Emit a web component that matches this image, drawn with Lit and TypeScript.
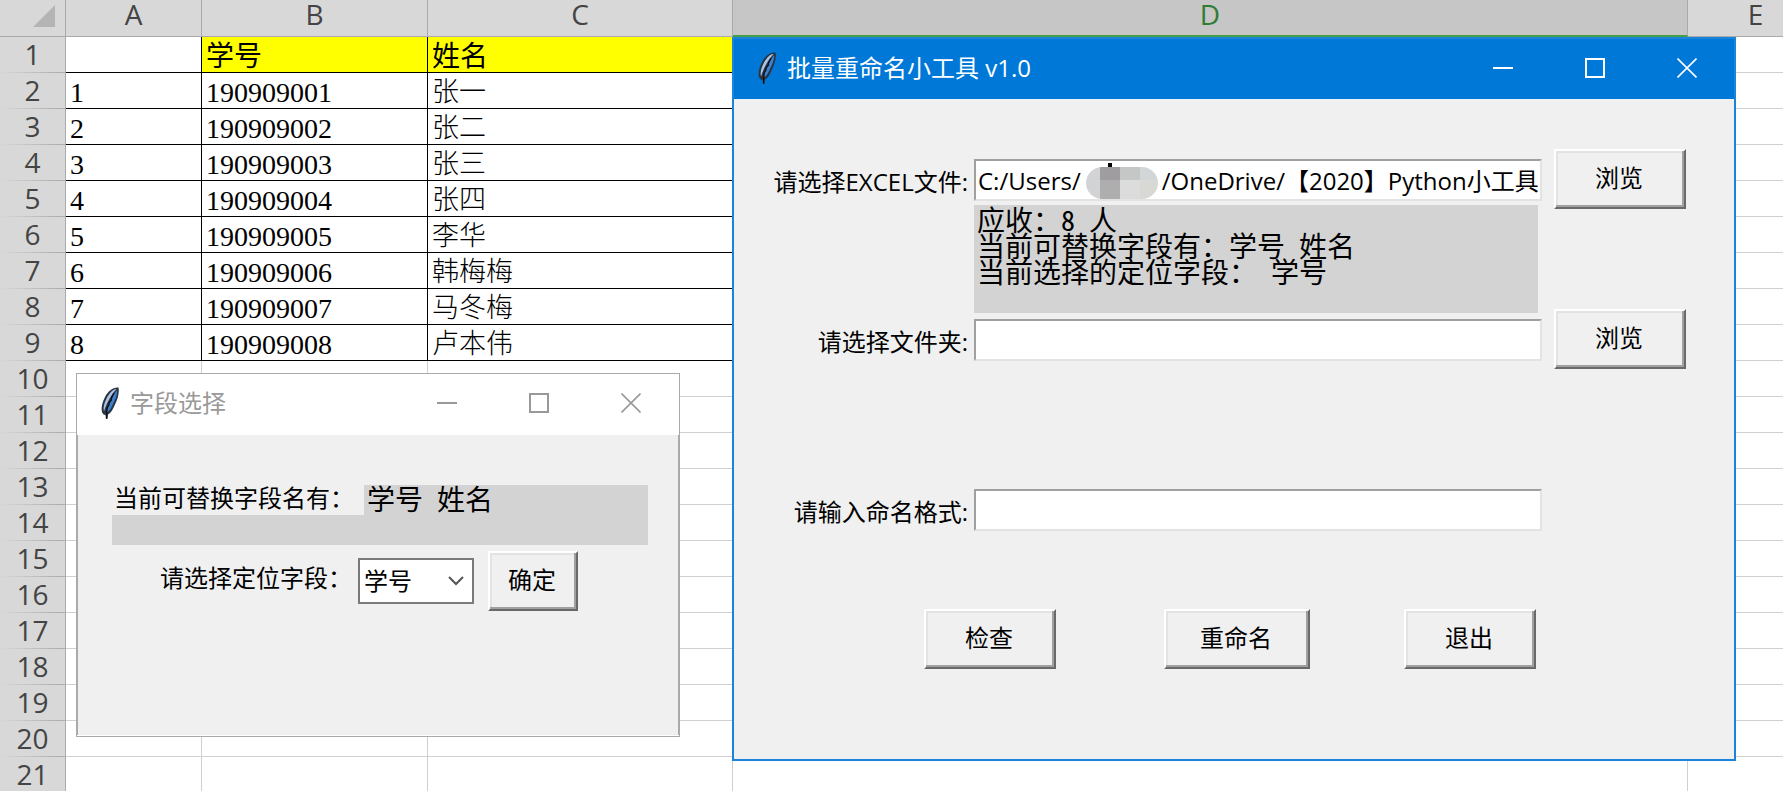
import { LitElement, html, css } from "lit";
import { customElement, property } from "lit/decorators.js";
import { classMap } from "lit/directives/class-map.js";

const COLUMNS = ["A", "B", "C", "D", "E"];
const RECORDS: string[][] = [
  ["", "学号", "姓名"],
  ["1", "190909001", "张一"],
  ["2", "190909002", "张二"],
  ["3", "190909003", "张三"],
  ["4", "190909004", "张四"],
  ["5", "190909005", "李华"],
  ["6", "190909006", "韩梅梅"],
  ["7", "190909007", "马冬梅"],
  ["8", "190909008", "卢本伟"],
];
const ROW_COUNT = 21;
const EXCEL_PATH = "C:/Users/             /OneDrive/【2020】Python小工具";
const LOG = "应收：8 人\n当前可替换字段有：学号 姓名\n当前选择的定位字段： 学号";

/* Spreadsheet behind the windows; its last column runs past the right edge */
@customElement("sheet-grid")
export class SheetGrid extends LitElement {
  static styles = css`
    :host {
      display: block;
    }
    .sheet {
      width: 1824px;
      min-width: 100%;
      border-collapse: separate;
      border-spacing: 0;
      table-layout: fixed;
      background: #fff;
    }
    .c-index { width: 66px; }
    .c-a { width: 136px; }
    .c-b { width: 226px; }
    .c-c { width: 305px; }
    .c-d { width: 955px; }
    th,
    td {
      box-sizing: border-box;
      padding: 0;
      height: 36px;
      white-space: nowrap;
      border-right: 1px solid #d0d0d0;
      border-bottom: 1px solid #d0d0d0;
    }
    th {
      font: 400 28px/28px "Open Sans", "Noto Sans", sans-serif;
      color: #444;
      background: #d8d8d8;
      text-align: center;
    }
    .col {
      height: 37px;
      padding-bottom: 8px;
      border-bottom-color: #aaa;
      border-right-color: #aaa;
    }
    .selected {
      background: #c6c6c6;
      color: #2f7d32;
      border-bottom: 2px solid #43a047;
      padding-bottom: 7px;
    }
    .row {
      padding-bottom: 2px;
      border-right-color: #aaa;
      border-bottom: 0;
      background:
        linear-gradient(to right, #d8d8d8, #aaa) bottom / 100% 1px no-repeat,
        #d8d8d8;
    }
    .corner {
      display: block;
      margin: 4px 0 0 33px;
    }
    td {
      font: 300 27px/31px "Liberation Serif", "Noto Sans CJK SC", serif;
      color: #000;
      text-align: left;
      padding: 4px 0 0 4px;
    }
    .data {
      border-color: #000;
    }
    .number,
    .title {
      font-size: 28px;
    }
    .title {
      background: #ff0;
      font-weight: 400;
    }
  `;

  render() {
    return html`
      <table class="sheet">
        <colgroup>
          <col class="c-index" /><col class="c-a" /><col class="c-b" />
          <col class="c-c" /><col class="c-d" /><col />
        </colgroup>
        <thead>
          <tr>
            <th class="col">
              <svg class="corner" width="22" height="22" viewBox="0 0 22 22" aria-hidden="true">
                <path d="M22 0V22H0Z" fill="#b4b4b4" />
              </svg>
            </th>
            ${COLUMNS.map(
              (c) => html`<th scope="col" class=${classMap({ col: true, selected: c === "D" })}>${c}</th>`
            )}
          </tr>
        </thead>
        <tbody>
          ${Array.from({ length: ROW_COUNT }, (_, r) => html`
            <tr>
              <th scope="row" class="row">${r + 1}</th>
              ${COLUMNS.map((_c, i) => {
                const data = r < RECORDS.length && i < 3;
                const title = data && r === 0 && i > 0;
                return html`<td class=${classMap({ data, title, number: data && !title && i < 2 })}>${
                  data ? RECORDS[r][i] : ""
                }</td>`;
              })}
            </tr>
          `)}
        </tbody>
      </table>
    `;
  }
}

/* Window frame with a feather icon, a caption and the three caption buttons */
@customElement("app-window")
export class AppWindow extends LitElement {
  @property() caption = "";
  @property({ type: Boolean, reflect: true }) active = false;

  static styles = css`
    :host {
      display: flex;
      flex-direction: column;
      box-sizing: border-box;
      border: 1px solid #aaa;
      background: #fff;
      color: #999;
      font-family: "Open Sans", "Noto Sans CJK SC", sans-serif;
    }
    :host([active]) {
      border: 2px solid #1a84da;
      background: #0078d7;
      color: #fff;
    }
    .bar {
      flex: none;
      box-sizing: border-box;
      display: flex;
      align-items: center;
      height: 61px;
      padding: 0 2px 3px 24px;
    }
    :host([active]) .bar {
      height: 60px;
      padding-right: 1px;
    }
    .icon {
      flex: none;
      width: 18px;
      height: 32px;
    }
    .caption {
      flex: 1;
      margin: 0 0 0 11px;
      font-size: 24px;
      font-weight: 400;
      line-height: 32px;
      white-space: nowrap;
    }
    .control {
      display: grid;
      place-items: center;
      width: 92px;
      height: 48px;
      padding: 0;
      border: 0;
      background: none;
      color: inherit;
    }
    .body {
      flex: 1;
      background: #f0f0f0;
      color: #000;
      border: solid #aaa;
      border-width: 0 1px;
      margin-bottom: 1px;
    }
    :host([active]) .body {
      border: 0;
      margin: 0;
    }
  `;

  private glyph(d: string, width: number) {
    return html`<svg width="20" height="20" viewBox="0 0 20 20" aria-hidden="true">
      <path d=${d} fill="none" stroke="currentColor" stroke-width=${width} />
    </svg>`;
  }

  render() {
    return html`
      <header class="bar">
        <svg class="icon" viewBox="0 0 18 32" aria-hidden="true">
          <path d="M17.500 0.500C12 0 7 4 4 10C1 16 0 21 1 25C1.500 27 3 28 4.500 28L5 32H6.500L7 27.500C10 26 12 22 14 17.500C17 12 18.500 5 17.500 0.500Z" fill="#2a3440" />
          <path d="M15.500 2C11 2.500 8 7 5.500 11.500C3 16.500 2 21 3 24.500C5 18 9 9 15.500 2Z" fill="#a9c4e6" />
          <path d="M16 3C16.500 8 14 13 12 17C10 21.500 8.500 24 6 25.500C7 18 11 10 16 3Z" fill="#3d7fd0" />
          <path d="M13 6L10.500 11L10.500 13L8 16L8 18L6 21L5.500 31.500" fill="none" stroke="#0b0f16" stroke-width="1.200" />
        </svg>
        <h2 class="caption">${this.caption}</h2>
        <button class="control" type="button" aria-label="最小化">${this.glyph("M0 10H20", 2)}</button>
        <button class="control" type="button" aria-label="最大化">${this.glyph("M1 1H19V19H1Z", 2)}</button>
        <button class="control" type="button" aria-label="关闭">${this.glyph("M0.500 0.500L19.500 19.500M19.500 0.500L0.500 19.500", 1.6)}</button>
      </header>
      <section class="body"><slot></slot></section>
    `;
  }
}

/* Shared look of the classic form controls */
const controls = css`
  :host {
    display: block;
    font: 400 24px/32px "Open Sans", "Noto Sans CJK SC", sans-serif;
    color: #000;
  }
  button {
    box-sizing: border-box;
    min-width: 90px;
    height: 60px;
    padding: 0 2px 2px 0;
    font: inherit;
    color: inherit;
    background: #f0f0f0;
    border: 2px solid;
    border-color: #fff #696969 #696969 #fff;
    box-shadow: inset -2px -2px #a0a0a0, inset 2px 2px #e3e3e3;
  }
  .wide {
    width: 132px;
  }
  .wider {
    width: 146px;
  }
  .log {
    font: 400 28px/26px "Noto Sans Mono CJK SC", "Noto Sans CJK SC", monospace;
    color: #000;
    background: #d3d3d3;
  }
  label {
    white-space: nowrap;
  }
`;

@customElement("rename-form")
export class RenameForm extends LitElement {
  static styles = [
    controls,
    css`
      .form {
        display: grid;
        grid-template-columns: 234px 1fr 132px;
        column-gap: 6px;
        padding: 60px 48px 0 0;
        align-items: center;
      }
      label {
        grid-column: 1;
        padding-top: 4px;
        text-align: right;
      }
      .field {
        position: relative;
        margin-right: 6px;
      }
      .entry {
        display: block;
        box-sizing: border-box;
        width: 100%;
        height: 42px;
        padding: 0 0 2px 2px;
        font: inherit;
        color: inherit;
        background: #fff;
        border: 2px solid;
        border-color: #a0a0a0 #e3e3e3 #e3e3e3 #a0a0a0;
        border-radius: 0;
        outline: none;
      }
      .mosaic {
        position: absolute;
        left: 112px;
        top: 4px;
      }
      .browse {
        margin: -10px 0 -8px;
      }
      .log {
        grid-column: 2;
        box-sizing: border-box;
        height: 108px;
        margin: 4px 10px 6px 0;
        padding: 1px 3px;
        border: 0;
        border-radius: 0;
        resize: none;
        overflow: hidden;
        outline: none;
      }
      .format {
        margin-top: 128px;
      }
      .actions {
        display: grid;
        grid-template-columns: 240px 240px 1fr;
        justify-items: start;
        padding: 78px 0 0 190px;
      }
    `,
  ];

  render() {
    return html`
      <form class="form">
        <label for="excel">请选择EXCEL文件:</label>
        <div class="field">
          <input id="excel" class="entry" type="text" .value=${EXCEL_PATH} />
          <svg class="mosaic" width="72" height="36" viewBox="0 0 72 36" aria-hidden="true">
            <clipPath id="pill"><rect y="4" width="72" height="32" rx="16" /></clipPath>
            <rect x="22" y="0" width="4" height="4" fill="#000" />
            <g clip-path="url(#pill)">
              <rect y="4" width="14" height="32" fill="#d2d3d5" />
              <rect x="14" y="4" width="20" height="13" fill="#a09da0" />
              <rect x="14" y="17" width="20" height="19" fill="#aeaeae" />
              <rect x="34" y="4" width="20" height="13" fill="#c5c7c7" />
              <rect x="34" y="17" width="20" height="19" fill="#dcdcdc" />
              <rect x="54" y="4" width="18" height="13" fill="#d3d6d8" />
              <rect x="54" y="17" width="18" height="19" fill="#d8d8d4" />
            </g>
          </svg>
        </div>
        <button class="wide browse" type="button">浏览</button>

        <textarea class="log" readonly aria-label="日志" .value=${LOG}></textarea>

        <label for="folder">请选择文件夹:</label>
        <div class="field"><input id="folder" class="entry" type="text" /></div>
        <button class="wide browse" type="button">浏览</button>

        <label class="format" for="format">请输入命名格式:</label>
        <div class="field format"><input id="format" class="entry" type="text" /></div>
      </form>
      <div class="actions">
        <button class="wide" type="button">检查</button>
        <button class="wider" type="button">重命名</button>
        <button class="wide" type="button">退出</button>
      </div>
    `;
  }
}

@customElement("field-picker")
export class FieldPicker extends LitElement {
  static styles = [
    controls,
    css`
      .fields {
        display: flex;
        align-items: flex-start;
        height: 60px;
        margin: 50px 30px 0 34px;
        background: #d3d3d3;
      }
      .name {
        box-sizing: border-box;
        width: 252px;
        height: 30px;
        padding-left: 2px;
        line-height: 26px;
        background: #f0f0f0;
      }
      .list {
        padding: 0 3px;
        white-space: pre;
      }
      .pick {
        display: flex;
        align-items: center;
        padding: 6px 0 0 82px;
      }
      .prompt {
        width: 198px;
        padding-bottom: 6px;
      }
      .select {
        position: relative;
        margin-right: 14px;
      }
      select {
        appearance: none;
        display: block;
        box-sizing: border-box;
        width: 116px;
        height: 46px;
        padding: 0 4px;
        font: inherit;
        color: inherit;
        background: #fff;
        border: 2px solid #7a7a7a;
        border-radius: 0;
      }
      .chevron {
        position: absolute;
        right: 10px;
        top: 18px;
        pointer-events: none;
      }
    `,
  ];

  render() {
    return html`
      <div class="fields">
        <span class="name">当前可替换字段名有：</span>
        <output class="log list">学号 姓名</output>
      </div>
      <div class="pick">
        <label class="prompt" for="key">请选择定位字段：</label>
        <div class="select">
          <select id="key">
            <option>学号</option>
            <option>姓名</option>
          </select>
          <svg class="chevron" width="16" height="10" viewBox="0 0 16 10" aria-hidden="true">
            <path d="M1 1L8 8L15 1" fill="none" stroke="#555" stroke-width="2" />
          </svg>
        </div>
        <button type="button">确定</button>
      </div>
    `;
  }
}

@customElement("app-root")
export class AppRoot extends LitElement {
  static styles = css`
    :host {
      display: block;
      position: relative;
      height: 100vh;
      overflow: hidden;
    }
    .picker {
      position: absolute;
      left: 76px;
      top: 373px;
      width: 604px;
      height: 364px;
    }
    .renamer {
      position: absolute;
      left: 732px;
      top: 37px;
      width: 1004px;
      height: 724px;
    }
  `;

  render() {
    return html`
      <sheet-grid></sheet-grid>
      <app-window class="picker" caption="字段选择"><field-picker></field-picker></app-window>
      <app-window class="renamer" active caption="批量重命名小工具 v1.0"><rename-form></rename-form></app-window>
    `;
  }
}
